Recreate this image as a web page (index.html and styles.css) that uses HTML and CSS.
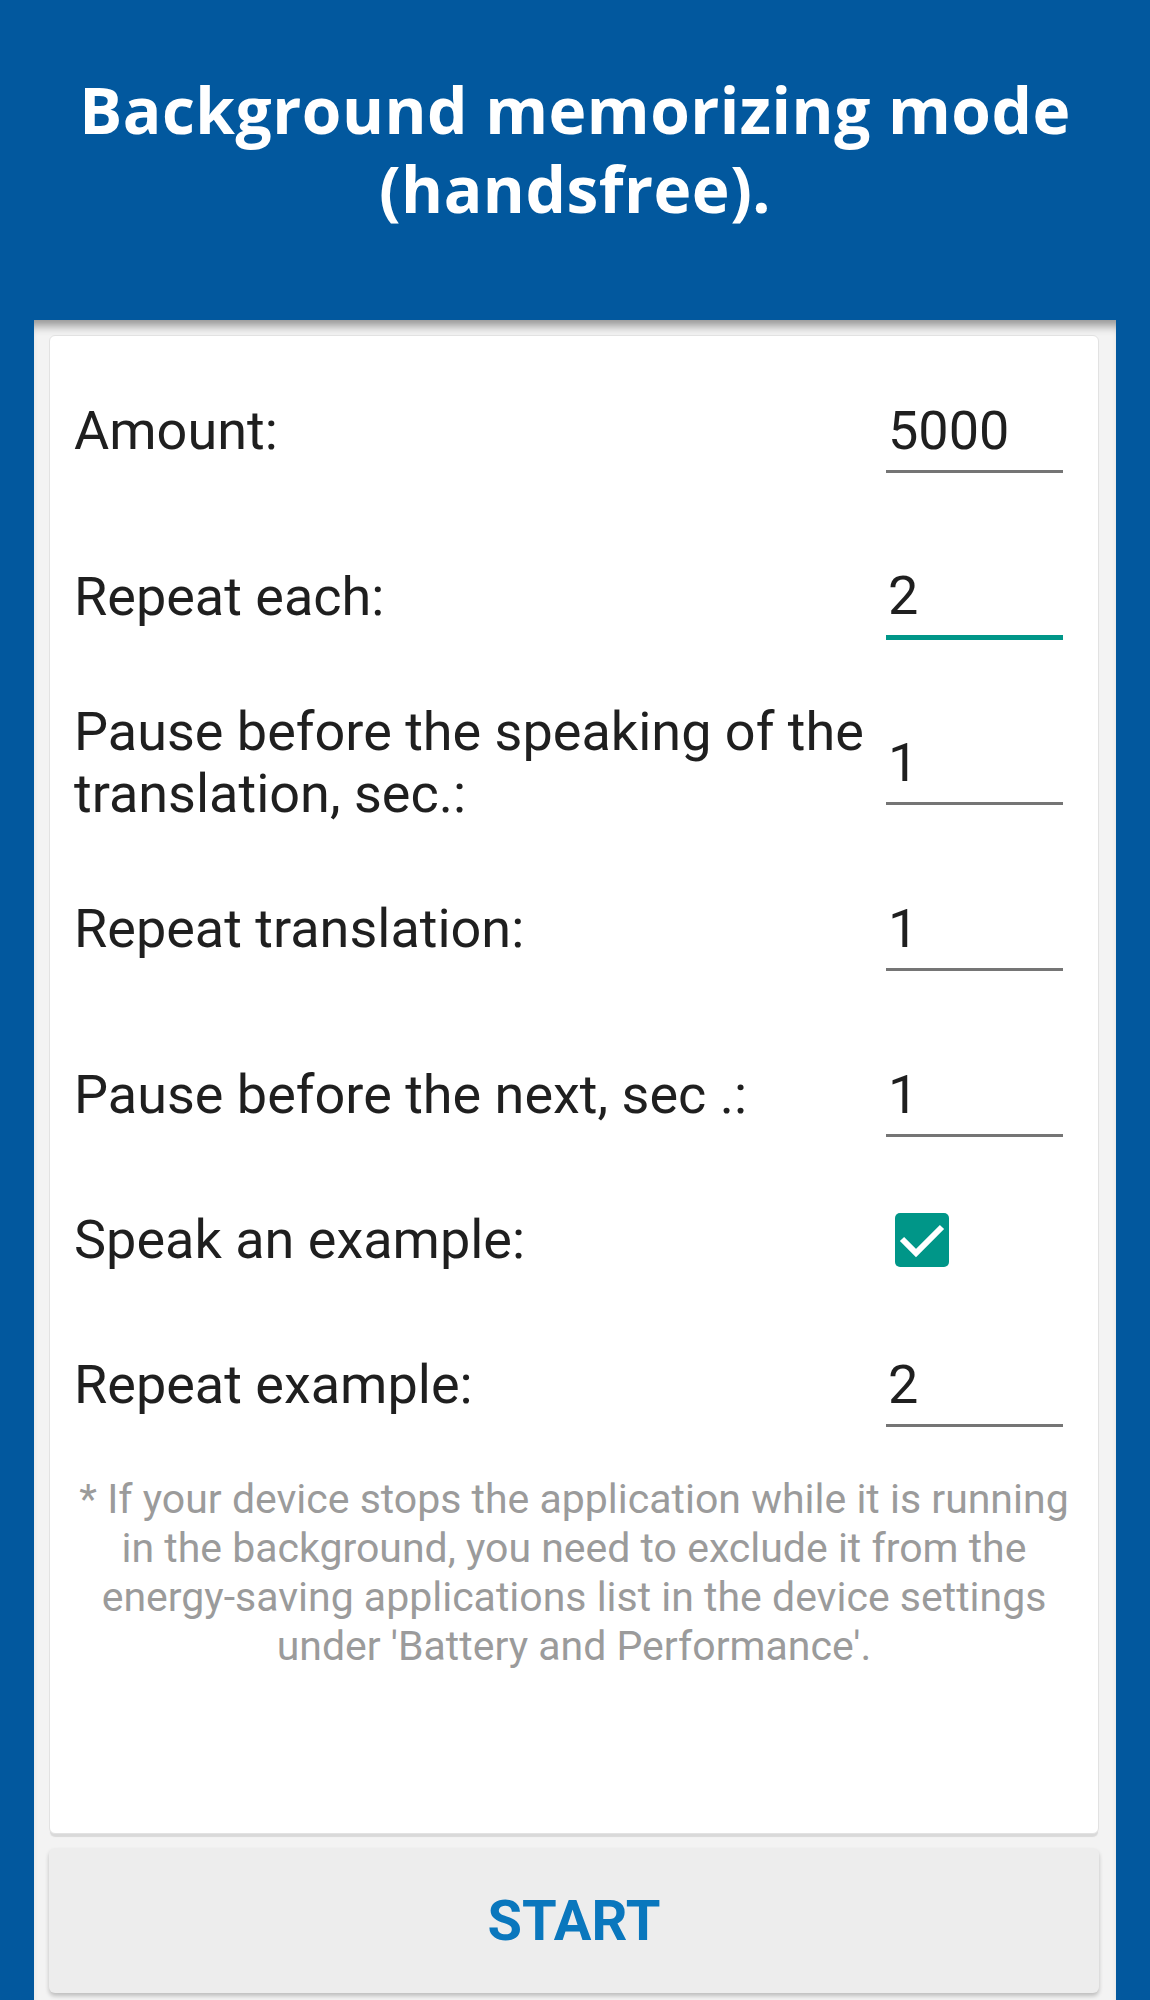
FILE: index.html
```html
<!DOCTYPE html>
<html lang="en">
<head>
    <meta charset="UTF-8">
    <meta name="viewport" content="width=device-width, initial-scale=1.0">
    <title>Background memorizing mode</title>
    <link rel="stylesheet" href="styles.css">
</head>
<body>
    <!-- Header -->
    <header class="title-bar">
        <h1>Background memorizing mode (handsfree).</h1>
    </header>

    <!-- Settings Panel -->
    <main class="panel">
        <div class="card">
            <div class="row">
                <span class="label">Amount:</span>
                <span class="field">5000</span>
            </div>
            <div class="row">
                <span class="label">Repeat each:</span>
                <span class="field focused">2</span>
            </div>
            <div class="row">
                <span class="label">Pause before the speaking of the translation, sec.:</span>
                <span class="field">1</span>
            </div>
            <div class="row">
                <span class="label">Repeat translation:</span>
                <span class="field">1</span>
            </div>
            <div class="row">
                <span class="label">Pause before the next, sec .:</span>
                <span class="field">1</span>
            </div>
            <div class="row row-check">
                <span class="label">Speak an example:</span>
                <span class="check-cell">
                    <span class="checkbox">
                        <svg viewBox="0 0 54 54" width="54" height="54">
                            <path d="M7 26 L21 40 L47 14" fill="none" stroke="#fff" stroke-width="6"/>
                        </svg>
                    </span>
                </span>
            </div>
            <div class="row">
                <span class="label">Repeat example:</span>
                <span class="field">2</span>
            </div>
            <p class="note">* If your device stops the application while it is running in the background, you need to exclude it from the energy-saving applications list in the device settings under 'Battery and Performance'.</p>
        </div>
        <button class="start-btn">START</button>
    </main>
</body>
</html>
```

FILE: styles.css
```css
/* Global Styles */
body {
    margin: 0;
    padding: 0;
    height: 2000px;
    overflow: hidden;
    background: #02589e;
    font-family: Roboto, "Liberation Sans", sans-serif;
}

/* Header */
.title-bar {
    padding: 70px 20px 92px;
    text-align: center;
}
.title-bar h1 {
    margin: 0;
    font-family: "Open Sans", "DejaVu Sans", sans-serif;
    font-weight: bold;
    font-size: 64px;
    line-height: 79px;
    letter-spacing: 0.5px;
    color: #fff;
}

/* Panel */
.panel {
    margin: 0 34px;
    padding: 15px 17px 0 15px;
    background: #f3f3f3;
    height: 1680px;
    box-shadow: inset 0 12px 10px -6px rgba(0, 0, 0, 0.38);
}

.card {
    background: #fff;
    border: 1px solid #e2e2e2;
    border-radius: 6px;
    box-shadow: 0 4px 1px -1px #d9d9d9;
    padding: 12px 35px 162px 24px;
}

/* Rows */
.row {
    display: flex;
    align-items: center;
    height: 166px;
}
.row-check {
    height: 124px;
}
.label {
    flex: 1;
    font-size: 54px;
    line-height: 62px;
    color: #1f1f1f;
    margin-right: 6px;
}
.field {
    width: 177px;
    font-size: 54px;
    line-height: 62px;
    color: #1f1f1f;
    padding: 11px 0 8px 2px;
    border-bottom: 3px solid #757575;
    box-sizing: border-box;
    height: 84px;
}
.field.focused {
    border-bottom: 5px solid #009688;
    height: 86px;
}
.check-cell {
    width: 177px;
    padding-left: 9px;
    box-sizing: border-box;
}
.checkbox {
    display: block;
    width: 54px;
    height: 54px;
    border-radius: 5px;
    background: #009688;
}
.checkbox svg {
    display: block;
}

/* Note */
.note {
    margin: 7px -20px 0 -9px;
    font-size: 41px;
    line-height: 49px;
    color: #9b9b9b;
    text-align: center;
}

/* Start Button */
.start-btn {
    display: block;
    width: 100%;
    height: 145px;
    margin-top: 14px;
    background: #ededed;
    border: none;
    border-radius: 6px;
    box-shadow: 0 3px 4px rgba(0, 0, 0, 0.22);
    font-family: Roboto, "Liberation Sans", sans-serif;
    font-weight: bold;
    font-size: 56px;
    color: #0a77bd;
    cursor: pointer;
}
```
